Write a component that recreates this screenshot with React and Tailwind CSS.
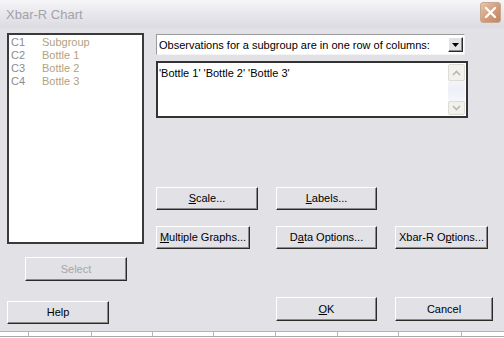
import React from "react";

const btn =
  "flex items-center justify-center bg-[#e2e1e6] border border-t-white border-l-white border-r-[#2a2a2a] border-b-[#2a2a2a] shadow-[inset_-1px_-1px_0_#8a8a8a] text-black text-[11px] leading-none";

function U({ children }) {
  return <span className="underline underline-offset-[1px]">{children}</span>;
}

function Chevron({ up }) {
  return (
    <svg width="9" height="6" viewBox="0 0 9 6">
      <polyline
        points={up ? "1,5 4.5,1.5 8,5" : "1,1 4.5,4.5 8,1"}
        fill="none"
        stroke="#b9b8b0"
        strokeWidth="1.6"
      />
    </svg>
  );
}

export default function App() {
  const items = [
    ["C1", "Subgroup"],
    ["C2", "Bottle 1"],
    ["C3", "Bottle 2"],
    ["C4", "Bottle 3"],
  ];
  const cells = [29, 63, 61, 61, 62, 62, 61, 63];
  return (
    <div className="w-[504px] h-[338px] overflow-hidden flex flex-col bg-white font-['Liberation_Sans',Arial,sans-serif] text-[11px]">
      {/* title bar */}
      <div className="h-[28px] shrink-0 flex items-center justify-between pl-[6px] pr-[3px] bg-gradient-to-b from-[#f6f6f8] via-[#e8e7ec] to-[#dcdbe1]">
        <span className="text-[13px] text-[#a3a2aa] leading-none">Xbar-R Chart</span>
        <div className="w-[21px] h-[21px] mb-[3px] rounded-[3px] border border-[#c9a890] bg-gradient-to-br from-[#e8c4ae] via-[#d49e80] to-[#c08462] flex items-center justify-center">
          <svg width="13" height="13" viewBox="0 0 13 13">
            <path d="M2 2 L11 11 M11 2 L2 11" stroke="white" strokeWidth="2.4" strokeLinecap="round" />
          </svg>
        </div>
      </div>

      {/* body */}
      <div className="h-[303px] shrink-0 flex bg-[#e2e1e6]">
        {/* left column */}
        <div className="pl-[7px] pt-[5px] flex flex-col">
          <div className="w-[137px] h-[211px] bg-white border-2 border-[#3a3a3a] pl-[2px] pt-[1px]">
            {items.map(([c, n]) => (
              <div key={c} className="flex h-[13px] items-center leading-none">
                <span className="w-[31px] text-[#8c8c8c]">{c}</span>
                <span className="text-[#b2a27e]">{n}</span>
              </div>
            ))}
          </div>
          <div className={btn + " ml-[18px] mt-[13px] w-[102px] h-[24px] !text-[#a6a5ab]"}>Select</div>
          <div className={btn + " mt-[20px] w-[102px] h-[23px]"}>Help</div>
        </div>

        {/* right column */}
        <div className="ml-[12px] pt-[6px] flex flex-col">
          <div className="w-[309px] h-[21px] bg-white border border-t-[#9a9a9a] border-l-[#9a9a9a] border-r-[#f4f4f4] border-b-[#f4f4f4] flex items-center justify-between pl-[2px] pr-[1px]">
            <span className="text-black leading-none pt-[2px]">Observations for a subgroup are in one row of columns:</span>
            <div className="w-[15px] h-[15px] bg-[#e2e1e6] border border-t-white border-l-white border-r-[#2a2a2a] border-b-[#2a2a2a] shadow-[inset_-1px_-1px_0_#8a8a8a] flex items-center justify-center">
              <svg width="7" height="4" viewBox="0 0 7 4">
                <polygon points="0,0 7,0 3.5,4" fill="black" />
              </svg>
            </div>
          </div>

          <div className="mt-[6px] w-[312px] h-[57px] bg-white border-2 border-[#333333] flex justify-between">
            <span className="pl-[1px] pt-[5px] text-black leading-none">'Bottle 1' 'Bottle 2' 'Bottle 3'</span>
            <div className="w-[17px] mr-[1px] flex flex-col justify-between py-[1px] bg-gradient-to-b from-white via-[#eef0f8] to-white">
              <div className="h-[17px] rounded-[2px] border border-[#dcdbd4] bg-[#f2f1ec] flex items-center justify-center">
                <Chevron up />
              </div>
              <div className="h-[14px] rounded-[2px] border border-[#dcdbd4] bg-[#f2f1ec] flex items-center justify-center">
                <Chevron />
              </div>
            </div>
          </div>

          <div className="mt-[69px] flex">
            <div className={btn + " w-[102px] h-[23px]"}>
              <U>S</U>cale...
            </div>
            <div className={btn + " ml-[18px] w-[101px] h-[23px]"}>
              <U>L</U>abels...
            </div>
          </div>

          <div className="mt-[16px] flex">
            <div className={btn + " w-[94px] h-[23px]"}>
              <U>M</U>ultiple Graphs...
            </div>
            <div className={btn + " ml-[26px] w-[101px] h-[23px]"}>
              D<U>a</U>ta Options...
            </div>
            <div className={btn + " ml-[18px] w-[93px] h-[23px]"}>
              Xbar-R O<U>p</U>tions...
            </div>
          </div>

          <div className="mt-[48px] flex">
            <div className={btn + " ml-[120px] w-[101px] h-[24px]"}>
              <U>O</U>K
            </div>
            <div className={btn + " ml-[18px] w-[98px] h-[24px]"}>Cancel</div>
          </div>
        </div>
      </div>

      {/* background sheet strip */}
      <div className="h-[7px] shrink-0 border-t border-[#b4b4b8] flex flex-col">
        <div className="h-[4px] flex">
          {cells.map((w, i) => (
            <div key={i} style={{ width: w }} className="shrink-0 border-r border-[#b8b8b8]" />
          ))}
        </div>
        <div className="border-t border-[#a8a8a8]" />
      </div>
    </div>
  );
}
